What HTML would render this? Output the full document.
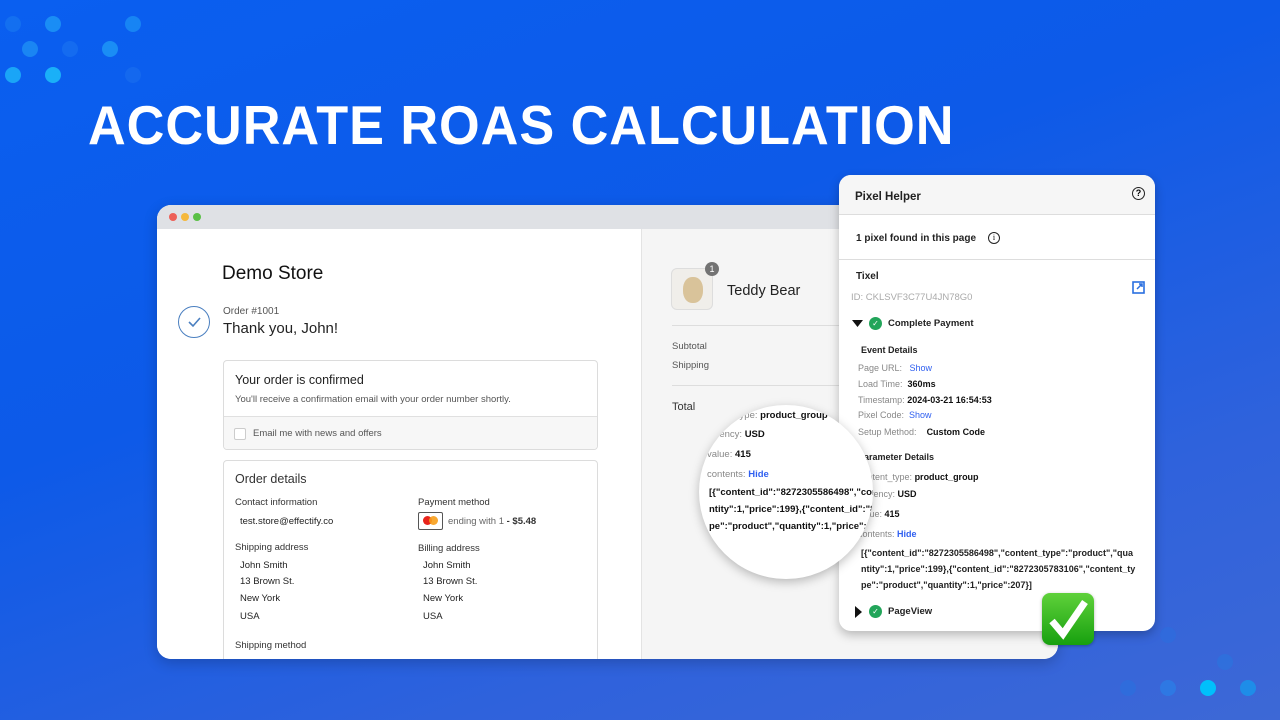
<!DOCTYPE html>
<html><head><meta charset="utf-8"><style>
*{margin:0;padding:0;box-sizing:border-box}
body{width:1280px;height:720px;overflow:hidden;position:relative;font-family:"Liberation Sans",Arial,sans-serif;background:linear-gradient(160deg,#0a5ff0 0%,#0d5ae8 40%,#2f62dc 75%,#3d68d6 100%)}
.dot{position:absolute;width:16px;height:16px;border-radius:50%}
.title{position:absolute;left:88px;top:93px;font-size:55px;font-weight:700;color:#fff;white-space:nowrap;transform:scaleX(0.95);transform-origin:left top;letter-spacing:1px}
.win{position:absolute;left:157px;top:205px;width:901px;height:454px;border-radius:14px;overflow:hidden;background:#fff;box-shadow:0 4px 14px rgba(0,0,0,.2)}
.bar{height:24px;background:#dfe1e5;position:relative}
.bar i{position:absolute;top:8px;width:8px;height:8px;border-radius:50%}
.left{position:absolute;left:0;top:24px;width:484px;bottom:0;background:#fff}
.right{position:absolute;left:484px;top:24px;right:0;bottom:0;background:#f5f5f5;border-left:1px solid #e3e3e3}
.t{position:absolute;white-space:nowrap}
.box{position:absolute;border:1px solid #dcdcdc;border-radius:4px;background:#fff}
.g{color:#555}
.panel{position:absolute;left:839px;top:175px;width:316px;height:456px;background:#fff;border-radius:12px;box-shadow:0 4px 10px rgba(0,0,0,.25);overflow:hidden;font-size:9.5px}
.panel .t{color:#222}
.lab{color:#888}
.b{font-weight:700;color:#111}
.blue{color:#3060f0;font-weight:700}
.mag{position:absolute;left:699px;top:405px;width:174px;height:174px;border-radius:50%;background:#fff;box-shadow:0 3px 10px rgba(0,0,0,.25);overflow:hidden;font-size:9.5px}
</style></head><body>
<div class="dot" style="left:45px;top:16px;background:#1a8df5"></div>
<div class="dot" style="left:125px;top:16px;background:#1a8df5;opacity:.8"></div>
<div class="dot" style="left:5px;top:16px;background:#1b7ff2;opacity:.5"></div>
<div class="dot" style="left:22px;top:41px;background:#1a85f3"></div>
<div class="dot" style="left:62px;top:41px;background:#1a75f0;opacity:.6"></div>
<div class="dot" style="left:102px;top:41px;background:#1a8df5"></div>
<div class="dot" style="left:5px;top:67px;background:#1aa5f7"></div>
<div class="dot" style="left:45px;top:67px;background:#1ab0f8"></div>
<div class="dot" style="left:125px;top:67px;background:#1a70ee;opacity:.6"></div>
<div class="dot" style="left:1160px;top:680px;background:#2a80e8;opacity:.7"></div>
<div class="dot" style="left:1200px;top:680px;background:#00c0fb"></div>
<div class="dot" style="left:1240px;top:680px;background:#1e8de8"></div>
<div class="dot" style="left:1120px;top:680px;background:#2a70e0;opacity:.6"></div>
<div class="dot" style="left:1217px;top:654px;background:#2a75e0;opacity:.6"></div>
<div class="dot" style="left:1160px;top:627px;background:#2a6fe0;opacity:.5"></div>
<div class="title">ACCURATE ROAS CALCULATION</div>

<div class="win">
 <div class="bar"><i style="left:12px;background:#ed5f57"></i><i style="left:24px;background:#f5b83c"></i><i style="left:36px;background:#5ac046"></i></div>
 <div class="left">
  <div class="t" style="left:65px;top:34px;font-size:19px;color:#111">Demo Store</div>
  <div style="position:absolute;left:21px;top:77px;width:32px;height:32px;border:1.5px solid #4a7fc0;border-radius:50%"><svg width="30" height="30" viewBox="0 0 30 30" style="position:absolute;left:0;top:0"><path d="M10 15l4 4 7-8" fill="none" stroke="#4a7fc0" stroke-width="1.6"/></svg></div>
  <div class="t g" style="left:66px;top:77px;font-size:10px">Order #1001</div>
  <div class="t" style="left:66px;top:91px;font-size:15px;color:#222">Thank you, John!</div>
  <div class="box" style="left:66px;top:131px;width:375px;height:90px;overflow:hidden">
   <div class="t" style="left:11px;top:12px;font-size:12.5px;color:#222">Your order is confirmed</div>
   <div class="t g" style="left:11px;top:33px;font-size:9.5px">You'll receive a confirmation email with your order number shortly.</div>
   <div style="position:absolute;left:0;top:55px;right:0;bottom:0;background:#f7f7f7;border-top:1px solid #e0e0e0">
    <div style="position:absolute;left:10px;top:11px;width:12px;height:12px;border:1px solid #ccc;border-radius:2px;background:#fff"></div>
    <div class="t g" style="left:29px;top:11px;font-size:9.5px">Email me with news and offers</div>
   </div>
  </div>
  <div class="box" style="left:66px;top:231px;width:375px;height:240px">
   <div class="t" style="left:11px;top:11px;font-size:12.5px;color:#333">Order details</div>
   <div class="t" style="left:11px;top:36px;font-size:9.5px;color:#333">Contact information</div>
   <div class="t" style="left:16px;top:55px;font-size:9.5px;color:#222">test.store@effectify.co</div>
   <div class="t" style="left:11px;top:81px;font-size:9.5px;color:#333">Shipping address</div>
   <div class="t" style="left:16px;top:99px;font-size:9.5px;color:#222">John Smith</div>
   <div class="t" style="left:16px;top:115px;font-size:9.5px;color:#222">13 Brown St.</div>
   <div class="t" style="left:16px;top:132px;font-size:9.5px;color:#222">New York</div>
   <div class="t" style="left:16px;top:150px;font-size:9.5px;color:#222">USA</div>
   <div class="t" style="left:11px;top:179px;font-size:9.5px;color:#333">Shipping method</div>
   <div class="t" style="left:194px;top:36px;font-size:9.5px;color:#333">Payment method</div>
   <div style="position:absolute;left:194px;top:51px;width:25px;height:18px;border:1px solid #555;border-radius:2px;background:#fff"><i style="position:absolute;left:4px;top:3px;width:9px;height:9px;border-radius:50%;background:#e8241c"></i><i style="position:absolute;left:10px;top:3px;width:9px;height:9px;border-radius:50%;background:#f79e1b;opacity:.9"></i></div>
   <div class="t" style="left:224px;top:55px;font-size:9.5px;color:#666">ending with 1 <b style="color:#333">- $5.48</b></div>
   <div class="t" style="left:194px;top:82px;font-size:9.5px;color:#333">Billing address</div>
   <div class="t" style="left:199px;top:99px;font-size:9.5px;color:#222">John Smith</div>
   <div class="t" style="left:199px;top:115px;font-size:9.5px;color:#222">13 Brown St.</div>
   <div class="t" style="left:199px;top:132px;font-size:9.5px;color:#222">New York</div>
   <div class="t" style="left:199px;top:150px;font-size:9.5px;color:#222">USA</div>
  </div>
 </div>
 <div class="right">
  <div style="position:absolute;left:29px;top:39px;width:42px;height:42px;border:1px solid #ddd;border-radius:6px;background:#f0eeea">
   <div style="position:absolute;left:11px;top:8px;width:20px;height:26px;border-radius:45%;background:#d9c39a"></div>
  </div>
  <div style="position:absolute;left:63px;top:33px;width:14px;height:14px;border-radius:50%;background:#737373;color:#fff;font-size:9px;text-align:center;line-height:14px">1</div>
  <div class="t" style="left:85px;top:54px;font-size:14.5px;color:#222">Teddy Bear</div>
  <div style="position:absolute;left:30px;top:96px;right:0;height:1px;background:#ddd"></div>
  <div class="t g" style="left:30px;top:112px;font-size:9.5px">Subtotal</div>
  <div class="t g" style="left:30px;top:131px;font-size:9.5px">Shipping</div>
  <div style="position:absolute;left:30px;top:156px;right:0;height:1px;background:#ddd"></div>
  <div class="t" style="left:30px;top:172px;font-size:11px;color:#333">Total</div>
 </div>
</div>

<div class="panel">
 <div style="height:40px;background:#f6f6f6;border-bottom:1px solid #ddd"></div>
 <div class="t b" style="left:16px;top:16px;font-size:11.5px">Pixel Helper</div>
 <div style="position:absolute;left:293px;top:12px;width:13px;height:13px;border:1.5px solid #222;border-radius:50%;font-size:9px;font-weight:700;text-align:center;line-height:10px">?</div>
 <div class="t b" style="left:17px;top:58px;font-size:10px">1 pixel found in this page</div>
 <div style="position:absolute;left:149px;top:57px;width:12px;height:12px;border:1px solid #222;border-radius:50%;font-size:8px;text-align:center;line-height:10px;font-family:'Liberation Serif',serif">i</div>
 <div style="position:absolute;left:0;right:0;top:84px;height:1px;background:#ddd"></div>
 <div class="t b" style="left:17px;top:96px;font-size:10px">Tixel</div>
 <div class="t lab" style="left:12px;top:117px;font-size:9.5px;color:#aaa">ID: CKLSVF3C77U4JN78G0</div>
 <svg style="position:absolute;left:293px;top:106px" width="13" height="13" viewBox="0 0 13 13"><rect x="1" y="1" width="11" height="11" fill="none" stroke="#2a6fe0" stroke-width="1.6"/><path d="M5 8l5-5M7 3h3v3" fill="none" stroke="#2a6fe0" stroke-width="1.5"/></svg>
 <svg style="position:absolute;left:13px;top:145px" width="11" height="8"><path d="M0 0h11L5.5 7z" fill="#111"/></svg>
 <div style="position:absolute;left:30px;top:142px;width:13px;height:13px;border-radius:50%;background:#22a55a;color:#fff;font-size:8px;text-align:center;line-height:13px">✓</div>
 <div class="t b" style="left:49px;top:143px;font-size:9.5px;font-weight:600">Complete Payment</div>
 <div class="t b" style="left:22px;top:170px;font-size:9px">Event Details</div>
 <div class="t" style="left:19px;top:188px;font-size:9px"><span class="lab">Page URL:</span> &nbsp;&nbsp;<span class="blue" style="font-weight:400">Show</span></div>
 <div class="t" style="left:19px;top:204px;font-size:9px"><span class="lab">Load Time:</span> &nbsp;<span class="b">360ms</span></div>
 <div class="t" style="left:19px;top:220px;font-size:9px"><span class="lab">Timestamp:</span> <span class="b">2024-03-21 16:54:53</span></div>
 <div class="t" style="left:19px;top:235px;font-size:9px"><span class="lab">Pixel Code:</span> &nbsp;<span class="blue" style="font-weight:400">Show</span></div>
 <div class="t" style="left:19px;top:252px;font-size:9px"><span class="lab">Setup Method:</span> &nbsp;&nbsp;&nbsp;<span class="b" style="font-weight:600">Custom Code</span></div>
 <div class="t lab" style="left:19px;top:277px;font-size:9px;font-weight:600">Parameter Details</div>
 <div class="t" style="left:19px;top:297px;font-size:9px"><span class="lab">content_type:</span> <span class="b">product_group</span></div>
 <div class="t" style="left:19px;top:314px;font-size:9px"><span class="lab">currency:</span> <span class="b">USD</span></div>
 <div class="t" style="left:19px;top:334px;font-size:9px"><span class="lab">value:</span> <span class="b">415</span></div>
 <div class="t" style="left:19px;top:354px;font-size:9px"><span class="lab">contents:</span> <span class="blue">Hide</span></div>
 <div class="t b" style="left:22px;top:370px;font-size:9px;line-height:16px">[{"content_id":"8272305586498","content_type":"product","qua<br>ntity":1,"price":199},{"content_id":"8272305783106","content_ty<br>pe":"product","quantity":1,"price":207}]</div>
 <svg style="position:absolute;left:16px;top:431px" width="8" height="12"><path d="M0 0v12l7-6z" fill="#111"/></svg>
 <div style="position:absolute;left:30px;top:430px;width:13px;height:13px;border-radius:50%;background:#22a55a;color:#fff;font-size:8px;text-align:center;line-height:13px">✓</div>
 <div class="t b" style="left:49px;top:431px;font-size:9.5px;font-weight:600">PageView</div>
</div>

<div class="mag">
 <div class="t" style="left:30px;top:5px;font-size:9.5px"><span class="lab">._type:</span> <span class="b">product_group</span></div>
 <div class="t" style="left:14px;top:24px;font-size:9.5px"><span class="lab">rrency:</span> <span class="b">USD</span></div>
 <div class="t" style="left:8px;top:44px;font-size:9.5px"><span class="lab">value:</span> <span class="b">415</span></div>
 <div class="t" style="left:8px;top:64px;font-size:9.5px"><span class="lab">contents:</span> <span class="blue">Hide</span></div>
 <div class="t b" style="left:10px;top:79px;font-size:9.5px;line-height:17px">[{"content_id":"8272305586498","con<br>ntity":1,"price":199},{"content_id":"82<br>pe":"product","quantity":1,"price":2</div>
</div>

<div style="position:absolute;left:1042px;top:593px;width:52px;height:52px;border-radius:8px;background:linear-gradient(#5fd13a,#17a00f);box-shadow:0 1px 3px rgba(0,0,0,.3)">
 <svg width="52" height="52" viewBox="0 0 52 52"><path d="M10 28l11 13L43 9" fill="none" stroke="#fff" stroke-width="7"/></svg>
</div>
</body></html>
